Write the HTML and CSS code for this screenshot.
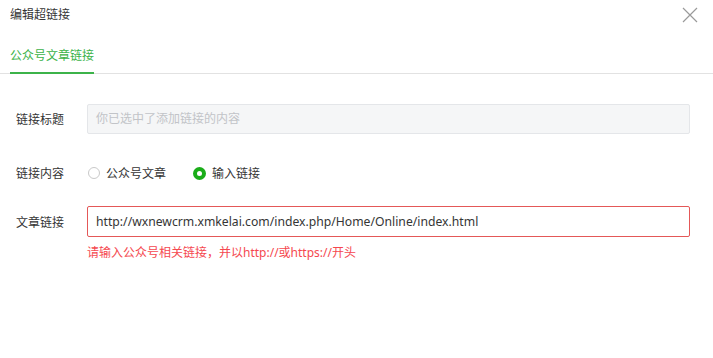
FILE: index.html
```html
<!DOCTYPE html>
<html lang="zh-CN">
<head>
<meta charset="utf-8">
<title>编辑超链接</title>
<link rel="stylesheet" href="styles.css">
</head>
<body>
<div class="dialog">
  <div class="header">
    <span class="title">编辑超链接</span>
    <span class="close" aria-label="关闭">
      <svg width="16" height="16" viewBox="0 0 16 16"><path d="M1 1L15 15M15 1L1 15" stroke="#9a9a9a" stroke-width="1.2" fill="none"/></svg>
    </span>
  </div>
  <div class="tabs">
    <div class="tab active">公众号文章链接</div>
  </div>
  <div class="form">
    <div class="row">
      <div class="label">链接标题</div>
      <div class="field">
        <div class="input disabled">你已选中了添加链接的内容</div>
      </div>
    </div>
    <div class="row row-radio">
      <div class="label">链接内容</div>
      <div class="field radios">
        <span class="radio"><span class="dot"></span>公众号文章</span>
        <span class="radio checked"><span class="dot"></span>输入链接</span>
      </div>
    </div>
    <div class="row row-link">
      <div class="label">文章链接</div>
      <div class="field">
        <div class="input error">http://wxnewcrm.xmkelai.com/index.php/Home/Online/index.html</div>
      </div>
    </div>
    <div class="row">
      <div class="label"></div>
      <div class="field msg">请输入公众号相关链接，并以http://或https://开头</div>
    </div>
  </div>
</div>
</body>
</html>
```

FILE: styles.css
```css
* { box-sizing: border-box; }
html, body { margin: 0; padding: 0; background: #fff; }
body {
  font-family: "Noto Sans", "Noto Sans CJK SC", sans-serif;
  font-size: 12px;
  color: #353535;
  width: 713px;
  height: 358px;
  overflow: hidden;
}
.header {
  display: flex;
  justify-content: space-between;
  align-items: center;
  height: 30px;
  padding: 0 15px 0 10px;
}
.title { font-size: 12px; color: #353535; line-height: 18px; }
.close { display: flex; width: 16px; height: 16px; }
.tabs {
  margin-top: 16px;
  height: 28px;
  border-bottom: 1px solid #e2e2e2;
  padding-left: 10px;
  display: flex;
}
.tab {
  line-height: 20px;
  height: 28px;
  padding-bottom: 6px;
  font-size: 12px;
  margin-bottom: -1px;
}
.tab.active {
  color: #3cb34a;
  border-bottom: 2px solid #3cb34a;
  width: 84px;
}
.form { margin-top: 30px; padding: 0 23px 0 16px; }
.row { display: flex; align-items: center; }
.row + .row { margin-top: 24px; }
.row.row-link { margin-top: 18px; }
.row.row-link + .row { margin-top: 8px; }
.label { width: 71px; flex: none; color: #353535; }
.field { flex: 1; }
.input {
  height: 30px;
  line-height: 28px;
  padding: 0 8px;
  border: 1px solid #e4e6e9;
  border-radius: 2px;
  font-size: 12px;
}
.input.disabled { background: #f5f6f7; color: #c2c4c8; }
.input.error {
  border-color: #e45858;
  color: #353535;
  height: 31px;
  font-size: 12.2px;
  line-height: 29px;
}
.radios { display: flex; align-items: center; height: 30px; }
.radio { display: inline-flex; align-items: center; margin-right: 27px; margin-left: 1px; }
.radio + .radio { margin-left: 0; }
.dot {
  width: 12px;
  height: 12px;
  border-radius: 50%;
  border: 1px solid #c9c9c9;
  margin-right: 6px;
  background: #fff;
}
.radio.checked .dot {
  border: 4px solid #1aad19;
  width: 13px;
  height: 13px;
}
.msg { color: #f5484f; line-height: 16px; }
```
